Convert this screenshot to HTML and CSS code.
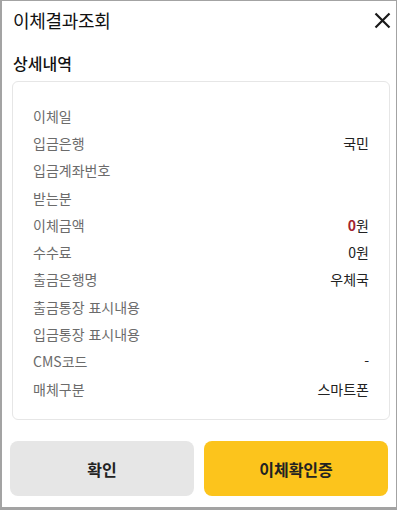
FILE: index.html
```html
<!DOCTYPE html>
<html lang="ko">
<head>
<meta charset="utf-8">
<link rel="stylesheet" href="styles.css">
</head>
<body>
<div class="frame">
  <div class="header">
    <h1 class="title">이체결과조회</h1>
    <svg class="close" width="17" height="17" viewBox="0 0 17 17"><path d="M1.5 1.5L15.5 15.5M15.5 1.5L1.5 15.5" stroke="#1a1a1a" stroke-width="2.2" fill="none"/></svg>
  </div>
  <h2 class="section">상세내역</h2>
  <div class="card">
    <div class="row"><span class="label">이체일</span><span class="value"></span></div>
    <div class="row"><span class="label">입금은행</span><span class="value">국민</span></div>
    <div class="row"><span class="label">입금계좌번호</span><span class="value"></span></div>
    <div class="row"><span class="label">받는분</span><span class="value"></span></div>
    <div class="row"><span class="label">이체금액</span><span class="value"><b class="amount">0</b>원</span></div>
    <div class="row"><span class="label">수수료</span><span class="value">0원</span></div>
    <div class="row"><span class="label">출금은행명</span><span class="value">우체국</span></div>
    <div class="row"><span class="label">출금통장 표시내용</span><span class="value"></span></div>
    <div class="row"><span class="label">입금통장 표시내용</span><span class="value"></span></div>
    <div class="row"><span class="label">CMS코드</span><span class="value">-</span></div>
    <div class="row"><span class="label">매체구분</span><span class="value">스마트폰</span></div>
  </div>
  <div class="buttons">
    <button class="btn btn-gray">확인</button>
    <button class="btn btn-yellow">이체확인증</button>
  </div>
</div>
</body>
</html>
```
FILE: styles.css
```css
html, body {
  margin: 0;
  padding: 0;
  background: #fff;
}
body {
  width: 400px;
  height: 510px;
  font-family: "Noto Sans CJK KR", "Noto Sans", sans-serif;
  color: #222;
}
.frame {
  box-sizing: border-box;
  width: 397px;
  height: 510px;
  border-style: solid;
  border-color: #a3a3a3;
  border-width: 1px 1px 3px 2px;
  display: flex;
  flex-direction: column;
}
.header {
  height: 38px;
  display: flex;
  align-items: center;
  justify-content: space-between;
  padding: 0 5px 0 11px;
}
.title {
  margin: 0;
  font-size: 18px;
  font-weight: 400;
  color: #111;
  letter-spacing: -0.3px;
}
.close {
  display: block;
  margin-top: 1px;
}
.section {
  margin: 6px 0 0 11px;
  height: 36px;
  line-height: 36px;
  font-size: 16px;
  font-weight: 500;
  color: #111;
}
.card {
  margin: 0 6px 0 10px;
  border: 1px solid #e6e6e6;
  border-radius: 6px;
  padding: 20px 20px 17px 20px;
  display: flex;
  flex-direction: column;
}
.row {
  height: 27.3px;
  display: flex;
  align-items: center;
  justify-content: space-between;
  font-size: 14px;
}
.label {
  color: #6b6b6b;
}
.value {
  color: #222;
}
.amount {
  color: #a32330;
  font-weight: 700;
}
.buttons {
  display: flex;
  gap: 10px;
  margin: 21px 8px 0 8px;
}
.btn {
  flex: 1;
  height: 55px;
  border: none;
  border-radius: 8px;
  font-family: "Noto Sans CJK KR", "Noto Sans", sans-serif;
  font-size: 16px;
  font-weight: 700;
  color: #222;
}
.btn-gray {
  background: #e6e6e6;
}
.btn-yellow {
  background: #fcc41c;
}
```
